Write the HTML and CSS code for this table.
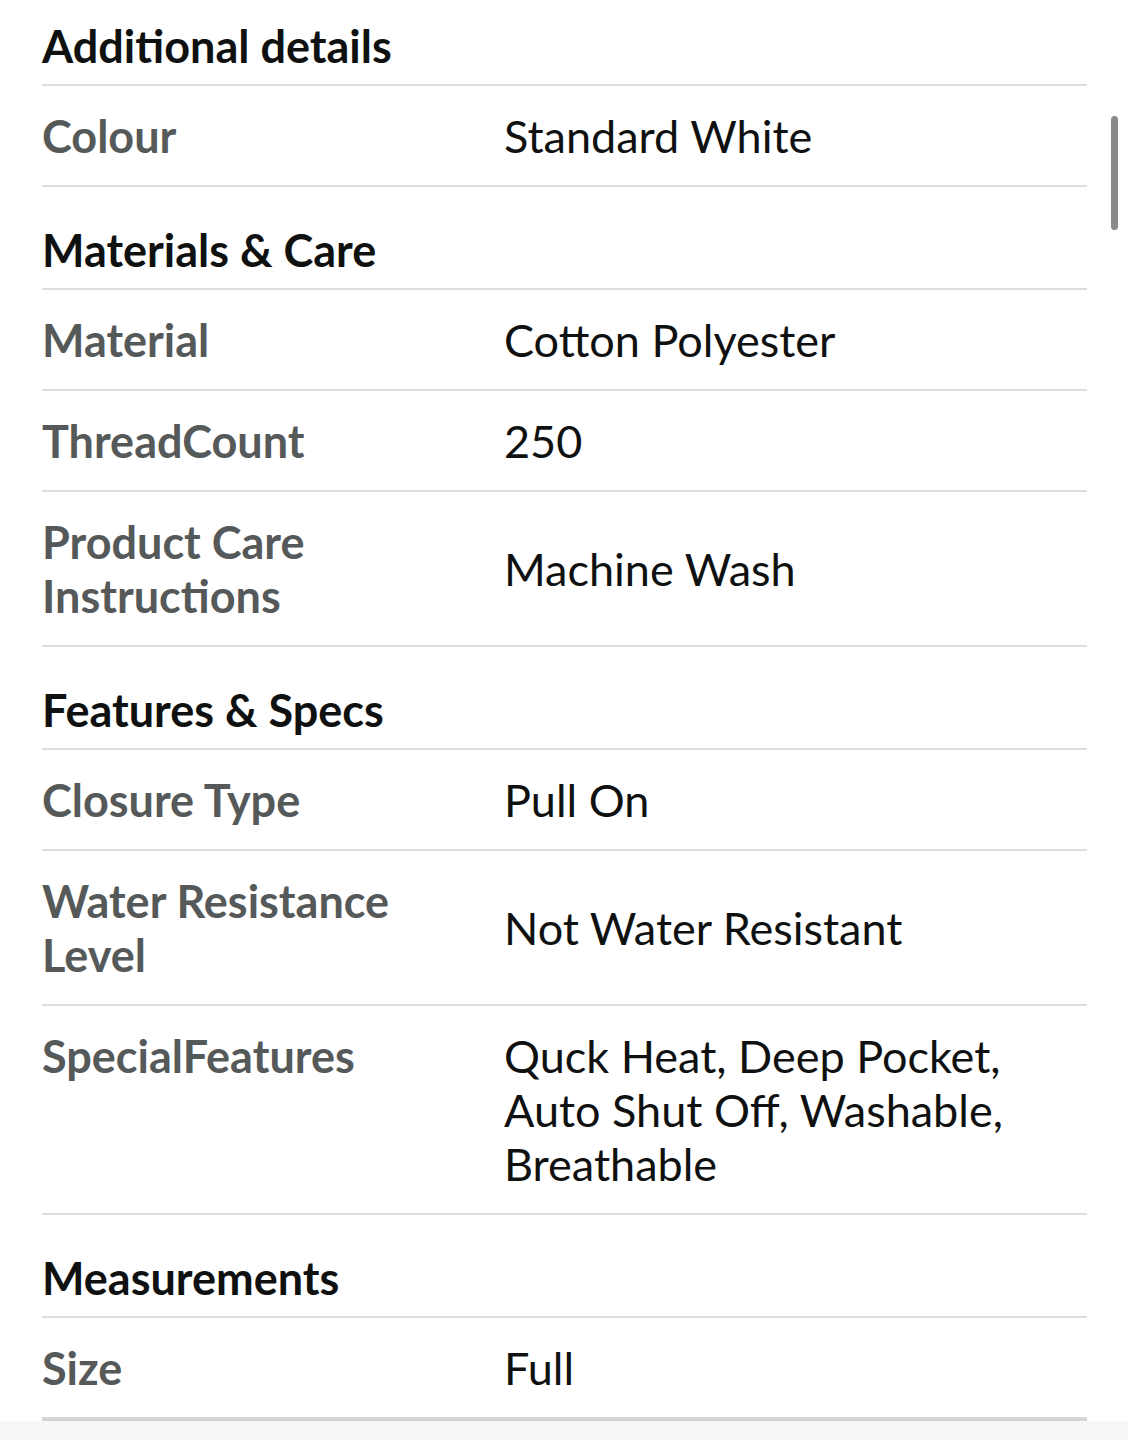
FILE: index.html
```html
<!DOCTYPE html>
<html lang="en">
<head>
<meta charset="utf-8">
<title>Additional details</title>
<link rel="stylesheet" href="styles.css">
</head>
<body>
<main class="details">
  <section class="group group-first">
    <h2 class="group-title">Additional details</h2>
    <dl class="rows">
      <div class="row"><dt>Colour</dt><dd>Standard White</dd></div>
    </dl>
  </section>
  <section class="group">
    <h2 class="group-title">Materials &amp; Care</h2>
    <dl class="rows">
      <div class="row"><dt>Material</dt><dd>Cotton Polyester</dd></div>
      <div class="row"><dt>ThreadCount</dt><dd>250</dd></div>
      <div class="row"><dt>Product Care Instructions</dt><dd>Machine Wash</dd></div>
    </dl>
  </section>
  <section class="group">
    <h2 class="group-title">Features &amp; Specs</h2>
    <dl class="rows">
      <div class="row"><dt>Closure Type</dt><dd>Pull On</dd></div>
      <div class="row"><dt>Water Resistance Level</dt><dd>Not Water Resistant</dd></div>
      <div class="row"><dt>SpecialFeatures</dt><dd>Quck Heat, Deep Pocket, Auto Shut Off, Washable, Breathable</dd></div>
    </dl>
  </section>
  <section class="group group-last">
    <h2 class="group-title">Measurements</h2>
    <dl class="rows">
      <div class="row"><dt>Size</dt><dd>Full</dd></div>
    </dl>
  </section>
</main>
<div class="footer-space"></div>
<div class="scrollbar"></div>
</body>
</html>
```

FILE: styles.css
```css
html, body {
  margin: 0;
  padding: 0;
  background: #ffffff;
}

body {
  font-family: Lato, "Open Sans", "Liberation Sans", sans-serif;
  color: #0f1111;
  position: relative;
  min-height: 1440px;
}

.details {
  padding: 0 41px 0 42px;
}

.group-title {
  margin: 0;
  padding: 36px 0 11px;
  font-size: 45px;
  line-height: 54px;
  font-weight: 700;
  color: #0f1111;
  border-bottom: 2px solid #dddddd;
}

.group-first .group-title {
  padding-top: 19px;
}

.rows {
  margin: 0;
  padding: 0;
}

.row {
  display: grid;
  grid-template-columns: 462px 1fr;
  padding: 23px 0 22px;
  border-bottom: 2px solid #dddddd;
  font-size: 45px;
  line-height: 54px;
}

.row dt {
  align-self: start;
  padding-right: 20px;
  font-weight: 700;
  color: #565959;
}

.row dd {
  align-self: center;
  margin: 0;
  padding-right: 40px;
  color: #0f1111;
}

.group-last .row:last-child {
  border-bottom: 4px solid #d5d5d5;
}

.footer-space {
  height: 40px;
  background: #f7f7f7;
}

.scrollbar {
  position: absolute;
  top: 116px;
  left: 1111px;
  width: 7px;
  height: 114px;
  border-radius: 4px;
  background: #8a8a8a;
}
```
